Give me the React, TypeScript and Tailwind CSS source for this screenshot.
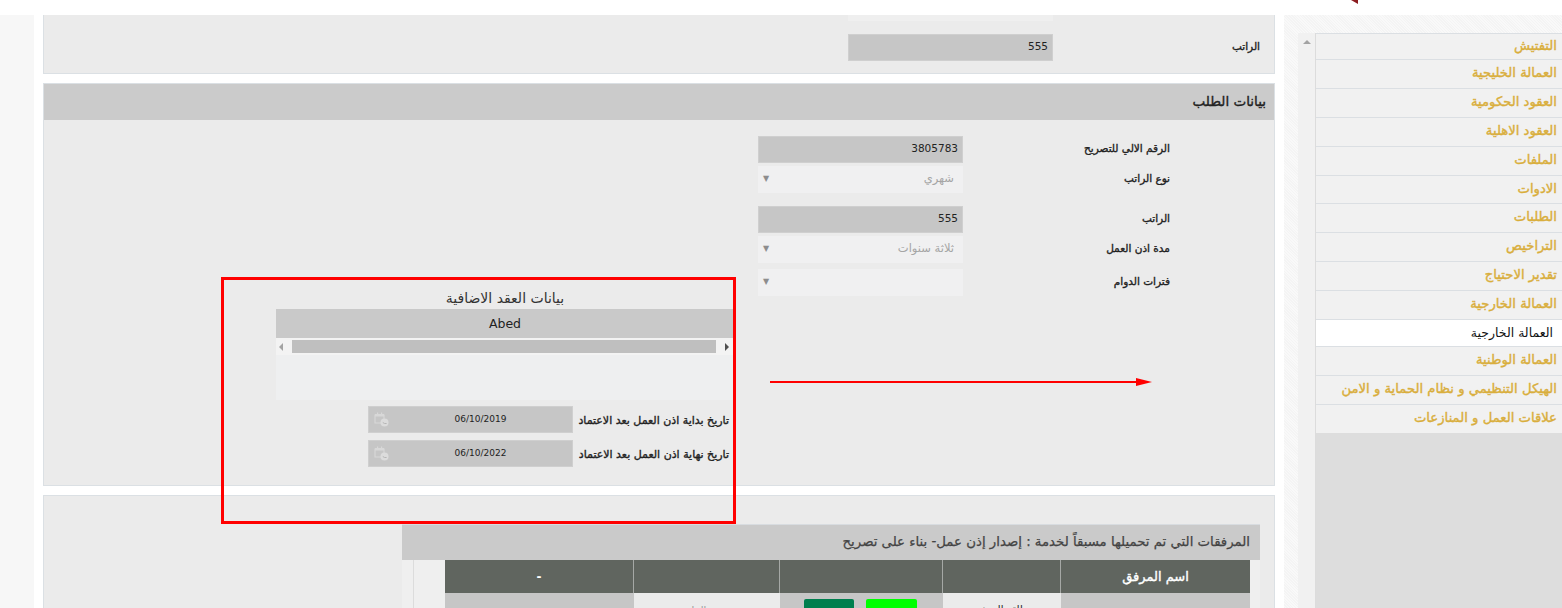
import type { ReactNode } from "react";

const font = "font-['DejaVu_Sans',sans-serif]";

const menuItems = [
  { label: "التفتيش", h: "h-[26px]" },
  { label: "العمالة الخليجية", h: "h-[29px]" },
  { label: "العقود الحكومية", h: "h-[29px]" },
  { label: "العقود الاهلية", h: "h-[29px]" },
  { label: "الملفات", h: "h-[29px]" },
  { label: "الادوات", h: "h-[28px]" },
  { label: "الطلبات", h: "h-[29px]" },
  { label: "التراخيص", h: "h-[29px]" },
  { label: "تقدير الاحتياج", h: "h-[29px]" },
  { label: "العمالة الخارجية", h: "h-[29px]" },
  { label: "العمالة الخارجية", h: "h-[27px]", active: true },
  { label: "العمالة الوطنية", h: "h-[29px]" },
  { label: "الهيكل التنظيمي و نظام الحماية و الامن", h: "h-[29px]" },
  { label: "علاقات العمل و المنازعات", h: "h-[29px]" },
];

function CalendarIcon() {
  return (
    <svg width="15" height="15" viewBox="0 0 15 15" className="shrink-0">
      <path d="M1 3h9v8H1z" fill="none" stroke="#d8d8d8" strokeWidth="1.2" />
      <path d="M1 2h9v2.5H1zM3 0.5h1.2v2H3zM7 0.5h1.2v2H7z" fill="#d8d8d8" />
      <circle cx="10.5" cy="10.5" r="4" fill="#dcdcdc" />
      <path d="M8.8 10.5l1.8 1h2" fill="none" stroke="#b5b5b5" strokeWidth="1" />
    </svg>
  );
}

function TextField({ value }: { value: string }) {
  return (
    <div className="w-[205px] h-[27px] bg-[#c6c6c6] border border-[#cfcfcf] flex items-center justify-end pr-[4px] pb-[2px] text-[10.5px] text-[#222]">
      {value}
    </div>
  );
}

function SelectField({ value }: { value?: string }) {
  return (
    <div className="w-[205px] h-[27px] bg-[#f0f0f1] flex items-center justify-between pl-[5px] pr-[9px] pb-[1px] text-[11.5px] text-[#a5a5a5]" dir="ltr">
      <span className="text-[8px] text-[#8d8d8d]">▼</span>
      <span dir="rtl">{value}</span>
    </div>
  );
}

function FormRow({ label, className, children }: { label: string; className?: string; children: ReactNode }) {
  return (
    <div className={`flex items-center ${className ?? ""}`}>
      {children}
      <div dir="rtl" className="w-[207px] pb-[2px] text-[10.5px] [-webkit-text-stroke:0.35px] text-[#222]">
        {label}
      </div>
    </div>
  );
}

function DateRow({ label, value }: { label: string; value: string }) {
  return (
    <div className="flex items-center h-[27px]">
      <div className="w-[205px] h-[27px] bg-[#c6c6c6] border border-[#cfcfcf] flex items-center pl-[5px] text-[9px] text-[#222]">
        <CalendarIcon />
        <span className="w-[184px] text-center">{value}</span>
      </div>
      <div dir="rtl" className="w-[156px] pt-[3px] text-[11px] [-webkit-text-stroke:0.35px] text-[#222] whitespace-nowrap">{label}</div>
    </div>
  );
}

export default function App() {
  return (
    <div className={`relative h-[608px] w-[1562px] overflow-hidden bg-white pt-[15px] flex ${font}`}>
      {/* corner of the logo in the header */}
      <svg width="8" height="4" viewBox="0 0 8 4" className="absolute left-[1351px] top-0">
        <path d="M0 0h7v4z" fill="#8c1c20" />
      </svg>

      {/* left strip */}
      <div className="w-[34px] h-[593px] shrink-0 bg-[#f7f7f7]" />

      {/* main column */}
      <div className="ml-[9px] w-[1232px] shrink-0 flex flex-col">
        <section className="h-[59px] bg-[#ebebeb] border-l border-b border-r border-[#dbe0e4] shrink-0">
          <div className="h-[6px] w-[205px] ml-[804px] bg-[#efefef]" />
          <div className="mt-[13px] flex items-center">
            <div className="ml-[804px]"><TextField value="555" /></div>
            <div dir="rtl" className="w-[207px] pb-[2px] text-[10.5px] [-webkit-text-stroke:0.35px] text-[#222]">الراتب</div>
          </div>
        </section>

        <section className="mt-[9px] h-[403px] bg-[#ebebeb] border border-[#dbe0e4] shrink-0">
          <div dir="rtl" className="h-[36px] bg-[#cbcbcb] flex items-center pr-[8px] pb-[2px] text-[13.5px] [-webkit-text-stroke:0.35px] text-[#222]">
            بيانات الطلب
          </div>
          <div className="flex">
            {/* additional contract block */}
            <div className="w-[714px] shrink-0 pt-[169px] pl-[232px] pr-[24px]">
              <div className="h-[20px] pb-[2px] flex items-center justify-center text-[14px] text-[#333]">بيانات العقد الاضافية</div>
              <div className="h-[29px] pt-[1px] bg-[#c9c9c9] flex items-center justify-center text-[12.5px] text-[#222]">Abed</div>
              <div className="h-[62px] bg-[#eeeff0]">
                <div className="h-[17px] bg-[#f3f3f3] flex items-center justify-between pl-[3px] pr-[5px]">
                  <span className="w-0 h-0 border-y-[4px] border-y-transparent border-r-[4px] border-r-[#a3a3a3]" />
                  <span className="w-[424px] h-[13px] bg-[#bfbfbf]" />
                  <span className="w-0 h-0 border-y-[4px] border-y-transparent border-l-[4px] border-l-[#505050]" />
                </div>
              </div>
              <div className="mt-[6px] ml-[92px] flex flex-col gap-[7px]">
                <DateRow label="تاريخ بداية اذن العمل بعد الاعتماد" value="06/10/2019" />
                <DateRow label="تاريخ نهاية اذن العمل بعد الاعتماد" value="06/10/2022" />
              </div>
            </div>

            {/* request fields */}
            <div className="pt-[16px]">
              <FormRow label="الرقم الالي للتصريح" className="h-[27px]"><TextField value="3805783" /></FormRow>
              <FormRow label="نوع الراتب" className="h-[27px] mt-[3px]"><SelectField value="شهري" /></FormRow>
              <FormRow label="الراتب" className="h-[27px] mt-[13px]"><TextField value="555" /></FormRow>
              <FormRow label="مدة اذن العمل" className="h-[27px] mt-[3px]"><SelectField value="ثلاثة سنوات" /></FormRow>
              <FormRow label="فترات الدوام" className="h-[27px] mt-[6px]"><SelectField /></FormRow>
            </div>
          </div>
        </section>

        <section className="mt-[9px] flex-1 bg-[#ebebeb] border-t border-l border-r border-[#dbe0e4] pt-[28px] pl-[358px] pr-[14px] min-h-0">
          <div className="w-[858px] bg-[#efefef]">
            <div dir="rtl" className="h-[36px] bg-[#cacaca] pb-[2px] flex items-center pr-[10px] text-[13.3px] [-webkit-text-stroke:0.25px] text-[#444] border-t border-[#d8dce0]">
              المرفقات التي تم تحميلها مسبقاً لخدمة : إصدار إذن عمل- بناء على تصريح
            </div>
            <div className="flex">
              <div className="w-[43px] h-[48px] shrink-0 pl-[11px]"><div className="h-full border-l border-[#dcdcdc]" /></div>
              <div className="w-[805px] grid grid-cols-[189px_146px_163px_118px_189px] text-center">
                <div className="h-[33px] bg-[#60655f] border-r border-[#a5a8a5] flex items-center justify-center text-[12px] font-bold text-white">-</div>
                <div className="h-[33px] bg-[#60655f] border-r border-[#a5a8a5]" />
                <div className="h-[33px] bg-[#60655f] border-r border-[#a5a8a5]" />
                <div className="h-[33px] bg-[#60655f] border-r border-[#a5a8a5]" />
                <div className="h-[33px] bg-[#60655f] flex items-center justify-center text-[13px] [-webkit-text-stroke:0.4px] text-white">اسم المرفق</div>
                <div className="h-[15px] bg-[#c6c6c6]" />
                <div className="h-[15px] bg-[#ebebeb] overflow-hidden pt-[10px] text-[10px] text-[#999]">عرض الملف</div>
                <div className="h-[15px] bg-[#c6c6c6] pt-[6px] pl-[24px] flex gap-[12px]">
                  <div className="w-[50px] h-[9px] rounded-t-[2px] bg-[#007f4e]" />
                  <div className="w-[51px] h-[9px] rounded-t-[2px] bg-[#00ff00]" />
                </div>
                <div className="h-[15px] bg-[#ebebeb] overflow-hidden pt-[9px] text-[10px] text-[#222]">بطاقة المرفق</div>
                <div className="h-[15px] bg-[#c6c6c6]" />
              </div>
            </div>
          </div>
        </section>
      </div>

      {/* side menu */}
      <aside className="ml-[9px] flex-1 h-[593px] bg-[#f7f7f7] bg-[repeating-linear-gradient(45deg,#f4f4f4_0px,#f4f4f4_1px,#f9f9f9_1px,#f9f9f9_2px)] pt-[18px] pl-[14px] flex">
        <div className="w-[17px] shrink-0 bg-[#f1f1f1] flex justify-center pt-[7px]">
          <span className="w-0 h-0 border-x-[4px] border-x-transparent border-b-[4px] border-b-[#a3a3a3]" />
        </div>
        <nav className="flex-1 bg-[#dddddd] border-l border-[#dcdcdc]" dir="rtl">
          {menuItems.map((item, i) => (
            <div
              key={i}
              className={
                item.active
                  ? `${item.h} bg-white border-t border-[#dbdfe3] flex items-center pr-[9px] text-[12.5px] text-[#111] whitespace-nowrap`
                  : `${item.h} bg-[#f1f1f1] border-t border-[#dbdfe3] flex items-center pr-[5px] pb-[2px] text-[13.2px] [-webkit-text-stroke:0.4px] text-[#d9ae3c] whitespace-nowrap`
              }
            >
              {item.label}
            </div>
          ))}
        </nav>
      </aside>

      {/* annotations drawn over the screenshot */}
      <div className="absolute left-[221px] top-[277px] w-[515px] h-[247px] border-[3px] border-[#ff0000]" />
      <svg width="384" height="10" viewBox="0 0 384 10" className="absolute left-[769px] top-[377px]">
        <path d="M1 5h368" stroke="#ff0000" strokeWidth="2" />
        <path d="M367 1l16 4-16 4z" fill="#ff0000" />
      </svg>
    </div>
  );
}
